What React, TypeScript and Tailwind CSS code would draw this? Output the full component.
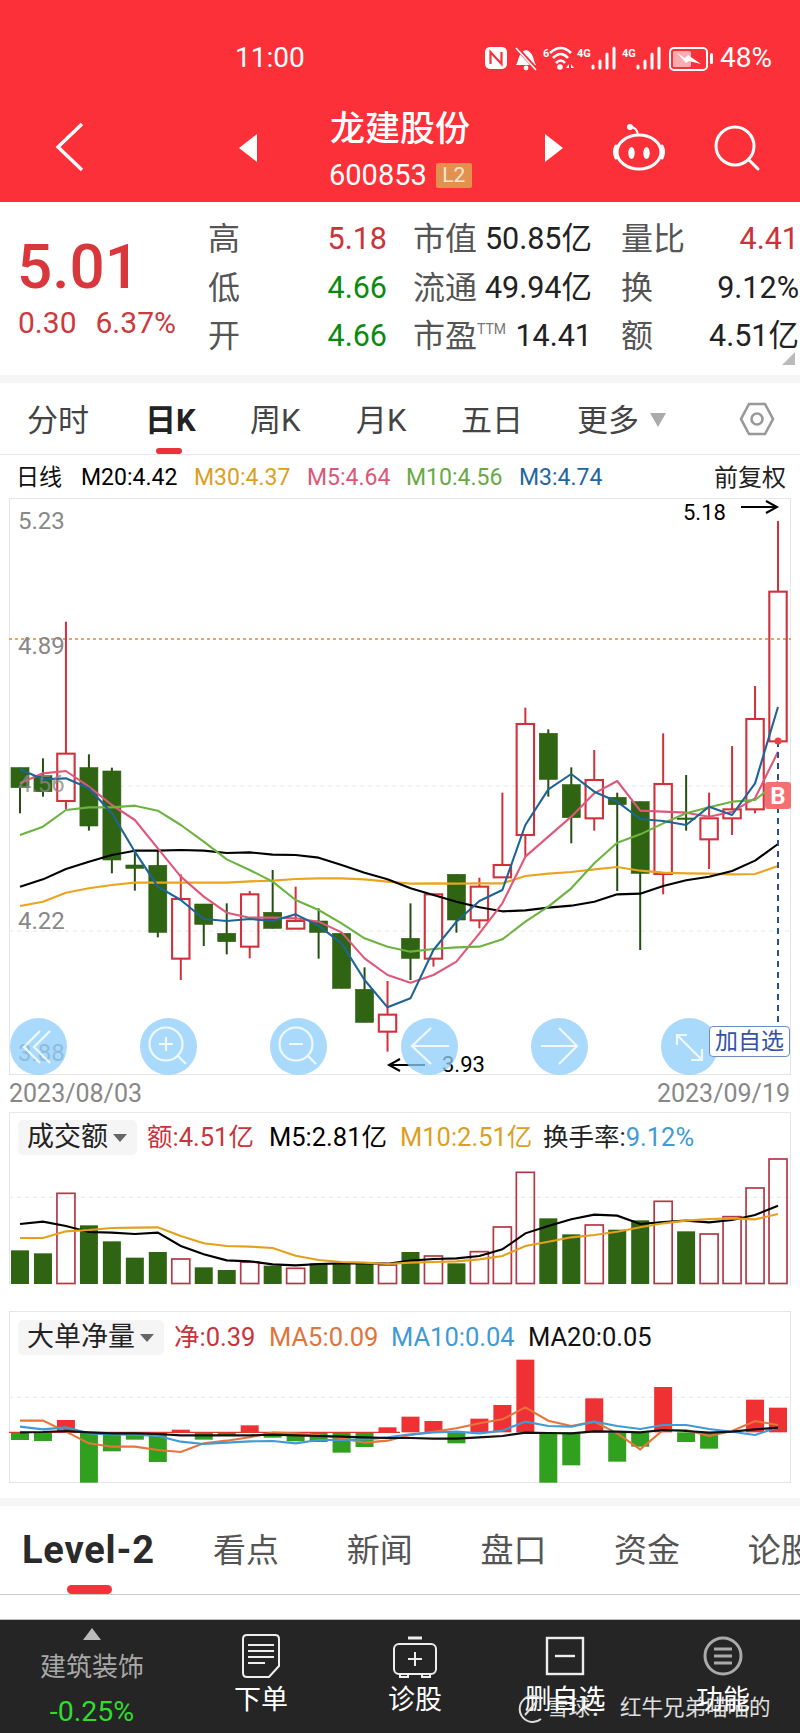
import React from "react";

const X = (i: number) => 20 + i * 22.97;
const Z = (base: number) => (z: number) => base + z / 3;
const cy = Z(720);
const vy = Z(1100);

type C = [string, number, number, number, number];
const candles: C[] = [
  ["g",143,143,203,280],["g",115,167,215,230],["r",-295,101,243,268],["g",103,143,318,332],["g",143,153,420,460],
  ["g",390,435,445,512],["g",390,436,637,652],["r",463,537,716,780],["g",552,552,613,678],["g",550,640,665,703],
  ["r",513,523,680,715],["g",450,577,625,625],["r",500,603,626,627],["g",565,603,637,716],["g",640,640,805,805],
  ["g",742,808,907,907],["r",783,884,935,995],["g",550,655,715,780],["r",523,523,716,740],["g",463,463,600,638],
  ["r",473,500,601,625],["r",218,435,472,473],["r",-37,12,345,410],["g",28,40,178,230],["g",142,194,293,370],
  ["r",90,180,295,332],["g",218,232,254,513],["g",245,245,460,690],["r",40,192,462,523],["g",165,294,298,332],
  ["r",218,295,358,447],["r",78,268,295,345],["r",-102,-3,268,280],["r",-597,-385,64,64],
];

const lines: [string, number[]][] = [
  ["#eaa41e",[558,545,518,505,495,488,488,488,488,488,484,482,477,475,475,478,485,491,490,491,490,490,468,461,456,448,441,452,458,460,461,463,462,438]],
  ["#000000",[500,478,447,425,405,392,392,390,392,399,397,404,405,413,435,458,478,505,525,545,562,574,571,563,557,545,523,521,498,481,470,453,422,372]],
  ["#e0577a",[190,160,153,200,255,300,385,470,530,578,593,593,595,605,637,715,765,788,765,725,640,550,410,350,290,220,183,272,275,278,290,275,235,95]],
  ["#6db33f",[345,320,270,262,262,257,272,315,365,418,450,485,540,570,610,655,680,695,687,682,680,658,605,560,505,430,368,343,310,280,262,245,240,185]],
  ["#1f6496",[148,178,175,205,280,395,500,540,597,603,597,603,583,617,670,780,862,835,690,605,543,510,315,208,162,215,245,297,303,315,260,285,190,-39]],
];

const volTops: [string, number][] = [
  ["g",451],["g",460],["r",280],["g",376],["g",424],["g",473],["g",456],["r",477],["g",502],["g",510],["r",486],["g",497],
  ["r",505],["g",490],["g",490],["g",490],["r",495],["g",456],["r",468],["g",490],["r",455],["r",381],["r",217],["g",355],
  ["g",403],["r",375],["g",389],["g",361],["r",304],["g",394],["r",402],["r",350],["r",264],["r",177],
];
const volBlack = [372,365,378,396,398,402,398,438,463,481,484,493,496,492,490,490,491,482,477,475,468,448,400,378,358,344,347,372,366,362,367,360,345,317];
const volOrange = [414,414,394,390,384,383,382,408,430,438,440,444,467,480,486,488,492,488,486,484,478,468,438,425,412,405,395,382,370,362,357,355,358,342];

const net = [1020,1023,960,1148,1054,1019,1086,989,1019,1008,976,1013,1024,1026,1058,1041,982,950,963,1030,956,915,779,1148,1096,895,1085,1040,861,1026,1046,997,899,923];
const netOrange = [962,962,995,1030,1040,1040,1050,1056,1030,1022,1012,998,1000,1006,1015,1028,1022,1005,995,985,970,958,922,962,978,965,1000,1048,990,990,1008,993,963,975];
const netBlue = [980,988,982,1000,1003,1004,1008,1025,1032,1028,1024,1023,1030,1020,1020,1018,1012,1003,997,995,1000,992,965,978,980,965,978,987,975,975,987,995,1005,982];
const netBlack = [997,996,993,997,1000,1000,1002,1006,1006,1006,1006,1004,1006,1008,1010,1012,1014,1014,1016,1016,1012,1008,998,999,1000,994,995,997,990,993,998,995,988,983];

const pts = (a: number[], f: (z: number) => number) => a.map((z, i) => `${X(i)},${f(z)}`).join(" ");

function Candles() {
  return (
    <svg className="absolute left-0 top-0" width="782" height="577" viewBox="9 498 782 577">
      <line x1="9" x2="791" y1="639" y2="639" stroke="#d8883a" strokeWidth="1.3" strokeDasharray="3 3" />
      <line x1="120" x2="791" y1="786" y2="786" stroke="#e6e6e6" strokeDasharray="4 4" />
      <line x1="9" x2="791" y1="931" y2="931" stroke="#e6e6e6" strokeDasharray="4 4" />
      {candles.map(([t, w1, b1, b2, w2], i) =>
        t === "g" ? (
          <g key={i}>
            <line x1={X(i)} x2={X(i)} y1={cy(w1)} y2={cy(w2)} stroke="#234f10" strokeWidth="2" />
            <rect x={X(i) - 9} y={cy(b1)} width="18" height={(b2 - b1) / 3} fill="#2f6512" stroke="#2b5c10" strokeWidth="0.6" />
          </g>
        ) : (
          <g key={i}>
            <line x1={X(i)} x2={X(i)} y1={cy(w1)} y2={cy(b1)} stroke="#d0313a" strokeWidth="2" />
            <line x1={X(i)} x2={X(i)} y1={cy(b2)} y2={cy(w2)} stroke="#d0313a" strokeWidth="2" />
            <rect x={X(i) - 8.7} y={cy(b1)} width="17.4" height={(b2 - b1) / 3} fill="#fff" fillOpacity="0" stroke="#d0313a" strokeWidth="2.1" />
          </g>
        )
      )}
      {lines.map(([c, a]) => (
        <polyline key={c} points={pts(a, cy)} fill="none" stroke={c} strokeWidth="2.1" strokeLinejoin="round" />
      ))}
      <line x1="778" x2="778" y1="741" y2="1026" stroke="#2a4f90" strokeWidth="2" strokeDasharray="6 5" />
      <circle cx="778" cy="741" r="3.5" fill="#ee4040" />
      <path d="M741 507H777M766 501L777 507L766 513" fill="none" stroke="#000" strokeWidth="2" />
      <path d="M425 1065H389M400 1059L389 1065L400 1071" fill="none" stroke="#000" strokeWidth="2" />
    </svg>
  );
}

function VolChart() {
  return (
    <svg className="absolute left-0 top-0" width="782" height="173" viewBox="9 1112 782 173">
      <line x1="9" x2="791" y1={vy(292)} y2={vy(292)} stroke="#e6e6e6" strokeDasharray="4 4" />
      {volTops.map(([t, z], i) =>
        t === "g" ? (
          <rect key={i} x={X(i) - 9} y={vy(z)} width="18" height={(552 - z) / 3} fill="#2f6512" />
        ) : (
          <rect key={i} x={X(i) - 9} y={vy(z)} width="18" height={(552 - z) / 3 - 0.5} fill="none" stroke="#b23a48" strokeWidth="1.7" />
        )
      )}
      <polyline points={pts(volBlack, vy)} fill="none" stroke="#000" strokeWidth="2.1" />
      <polyline points={pts(volOrange, vy)} fill="none" stroke="#e3a01c" strokeWidth="2.1" />
    </svg>
  );
}

function NetChart() {
  return (
    <svg className="absolute left-0 top-0" width="782" height="172" viewBox="9 1311 782 172">
      <line x1="9" x2="791" y1={vy(892)} y2={vy(892)} stroke="#e6e6e6" strokeDasharray="4 4" />
      {net.map((z, i) =>
        z > 997 ? (
          <rect key={i} x={X(i) - 9} y={vy(997)} width="18" height={(z - 997) / 3} fill="#31a01e" />
        ) : (
          <rect key={i} x={X(i) - 9} y={vy(z)} width="18" height={(997 - z) / 3} fill="#ef3133" />
        )
      )}
      <line x1="9" x2="400" y1={vy(997)} y2={vy(997)} stroke="#d83a30" strokeWidth="1.4" />
      <polyline points={pts(netOrange, vy)} fill="none" stroke="#e8743c" strokeWidth="2.1" />
      <polyline points={pts(netBlue, vy)} fill="none" stroke="#3f9ad6" strokeWidth="2.1" />
      <polyline points={pts(netBlack, vy)} fill="none" stroke="#111" strokeWidth="2.1" />
    </svg>
  );
}

function Bars({ x }: { x: number }) {
  return (
    <path
      d={`M${x + 1} 36V38M${x + 8} 31V38M${x + 15} 24V38M${x + 22} 18V38`}
      stroke="#fff"
      strokeWidth="3"
      strokeLinecap="round"
    />
  );
}

function StatusIcons() {
  return (
    <svg width="240" height="36" viewBox="0 10 240 36" className="block flex-none">
      <rect x="5" y="17" width="22" height="22" rx="5" fill="#fff" />
      <path d="M10.5 34V22L21.5 34V22" fill="none" stroke="#fb3038" strokeWidth="2.2" />
      <path d="M36 35C39 31 38 22 46 20C54 22 53 31 56 35Z" fill="#fff" />
      <circle cx="46" cy="38" r="2.4" fill="#fff" />
      <path d="M36 17L57 40" stroke="#fb3038" strokeWidth="4" />
      <path d="M36 18L56 40" stroke="#fff" strokeWidth="1.6" />
      <text x="63" y="27" fontSize="11" fontWeight="700" fill="#fff" fontFamily="Roboto">6</text>
      <path d="M70 23Q81 13 91 23M73 28Q81 20 88 28M76 33Q81 28 85 33" fill="none" stroke="#fff" strokeWidth="2.6" />
      <circle cx="80" cy="37" r="2.8" fill="#fff" />
      <path d="M86 38L89 34V38ZM91 34L94 38H91Z" fill="#fff" />
      <text x="97" y="27" fontSize="11" fontWeight="700" fill="#fff" fontFamily="Roboto">4G</text>
      <Bars x={112} />
      <text x="142" y="27" fontSize="11" fontWeight="700" fill="#fff" fontFamily="Roboto">4G</text>
      <Bars x={157} />
      <rect x="190" y="18" width="37" height="22" rx="4" fill="none" stroke="#fff" strokeWidth="2" />
      <rect x="193" y="21" width="18" height="16" rx="1.5" fill="#fff" fillOpacity="0.6" />
      <path d="M197 23L205 28L208 25L221 34L209 31L206 33Z" fill="#fff" />
      <rect x="230" y="23" width="3" height="11" rx="1.5" fill="#fff" />
    </svg>
  );
}

function RoundBtn({ children }: { children: React.ReactNode }) {
  return <div className="absolute top-[519px] w-[57px] h-[57px] rounded-full bg-[#8ecdfa]/75">{children}</div>;
}

function BtnIcon({ children }: { children: React.ReactNode }) {
  return (
    <svg width="57" height="57" viewBox="0 0 57 57" fill="none" stroke="#fff" strokeOpacity="0.8" strokeWidth="2.2">
      {children}
    </svg>
  );
}

function Chip({ label, w }: { label: string; w: string }) {
  return (
    <div className={`${w} h-[35px] rounded-[5px] bg-[#f5f5f5] flex items-center pl-[9px] gap-[5px] text-[27px] text-[#222] flex-none`}>
      <span>{label}</span>
      <span className="w-0 h-0 border-x-[7px] border-x-transparent border-t-[8px] border-t-[#666]" />
    </div>
  );
}

function Stat({ label, value, color = "text-[#222]", extra }: { label: string; value: string; color?: string; extra?: React.ReactNode }) {
  return (
    <div className="flex justify-between items-center h-[48.5px] whitespace-nowrap">
      <span className="text-[32px] text-[#555] flex items-start">{label}{extra}</span>
      <span className={`text-[30.5px] ${color}`}>{value}</span>
    </div>
  );
}

export default function App() {
  return (
    <div className="w-[800px] h-[1733px] overflow-hidden bg-white font-['Roboto','Noto_Sans_CJK_SC',sans-serif] leading-none">
      {/* red header */}
      <header className="h-[202px] bg-[#fb3038] text-white">
        <div className="h-[100px] pt-[40px] pl-[235px] flex items-start">
          <span className="w-[245px] h-[36px] flex items-center text-[28px] flex-none">11:00</span>
          <StatusIcons />
          <span className="h-[36px] flex items-center text-[28px]">48%</span>
        </div>
        <div className="relative h-[102px] flex">
          <svg className="ml-[55px] mt-[22px] flex-none" width="30" height="50" viewBox="0 0 30 50" fill="none" stroke="#fff" strokeWidth="3.4">
            <path d="M27 2L3 25L27 48" />
          </svg>
          <svg className="ml-[153px] mt-[34px] flex-none" width="20" height="28" viewBox="0 0 20 28"><path d="M19 0V28L1 14Z" fill="#fff" /></svg>
          <div className="ml-[72px] w-[214px] flex-none pt-[11px]">
            <div className="text-[35px] font-medium h-[36px] flex items-center">龙建股份</div>
            <div className="flex items-center mt-[14px] -ml-px">
              <span className="text-[29px]">600853</span>
              <span className="ml-[9px] w-[36px] h-[25px] bg-[#e3914f] rounded-[2px] flex items-center justify-center text-[21px] text-[#fbe7cf]">L2</span>
            </div>
          </div>
          <svg className="mt-[34px] flex-none" width="20" height="28" viewBox="0 0 20 28"><path d="M1 0V28L19 14Z" fill="#fff" /></svg>
          <svg className="ml-[48px] mt-[22px] flex-none" width="54" height="50" viewBox="0 0 54 50" fill="none" stroke="#fff">
            <circle cx="18" cy="5" r="3" fill="#fff" stroke="none" />
            <path d="M18 5Q25 5 26 13" strokeWidth="2" />
            <ellipse cx="27" cy="30" rx="22" ry="17" strokeWidth="3" />
            <path d="M4 24Q1 30 4 36M50 24Q53 30 50 36" strokeWidth="3" strokeLinecap="round" />
            <ellipse cx="19.5" cy="31" rx="3.2" ry="6" fill="#fff" stroke="none" />
            <ellipse cx="34.5" cy="31" rx="3.2" ry="6" fill="#fff" stroke="none" />
          </svg>
          <svg className="ml-[47px] mt-[23px] flex-none" width="48" height="50" viewBox="0 0 48 50" fill="none" stroke="#fff" strokeWidth="3">
            <circle cx="22" cy="23" r="19" />
            <path d="M36 37L45 46" strokeLinecap="round" />
          </svg>
        </div>
      </header>

      {/* quote stats */}
      <section className="relative h-[173px] flex">
        <div className="w-[208px] flex-none pl-[17px] pt-[35px]">
          <div className="text-[62px] leading-[60px] font-medium text-[#d8383c]">5.01</div>
          <div className="mt-[11px] flex text-[30px] text-[#cc3a3e] whitespace-nowrap pl-[1px]">
            <span>0.30</span><span className="ml-[19px]">6.37%</span>
          </div>
        </div>
        <div className="pt-[13px] flex-none flex">
          <div className="w-[179px]">
            <Stat label="高" value="5.18" color="text-[#cc3338]" />
            <Stat label="低" value="4.66" color="text-[#0b8a12]" />
            <Stat label="开" value="4.66" color="text-[#0b8a12]" />
          </div>
          <div className="w-[179px] ml-[26px]">
            <Stat label="市值" value="50.85亿" />
            <Stat label="流通" value="49.94亿" />
            <Stat label="市盈" value="14.41" extra={<span className="text-[14px] mt-[2px] text-[#777]">TTM</span>} />
          </div>
          <div className="w-[178px] ml-[29px]">
            <Stat label="量比" value="4.41" color="text-[#cc3338]" />
            <Stat label="换" value="9.12%" />
            <Stat label="额" value="4.51亿" />
          </div>
        </div>
        <span className="absolute right-[5px] bottom-[10px] w-0 h-0 border-l-[13px] border-l-transparent border-b-[13px] border-b-[#bbb]" />
      </section>
      <div className="h-[8px] bg-[#f5f5f5]" />

      {/* period tabs */}
      <nav className="relative h-[72px] border-b border-[#e8e8e8] flex items-center pl-[27px] pt-[3px] text-[31px] text-[#444] whitespace-nowrap">
        <span className="w-[118px]">分时</span>
        <span className="w-[105px] font-bold text-[#222]">日K</span>
        <span className="w-[106px]">周K</span>
        <span className="w-[105px]">月K</span>
        <span className="w-[116px]">五日</span>
        <span>更多</span>
        <span className="ml-[11px] w-0 h-0 border-x-[8px] border-x-transparent border-t-[14px] border-t-[#aaa]" />
        <svg className="ml-[73px] -mt-[3px]" width="36" height="36" viewBox="0 0 36 36" fill="none" stroke="#999" strokeWidth="2.6">
          <path d="M10 3H26L34 18L26 33H10L2 18Z" />
          <circle cx="18" cy="18" r="5.5" />
        </svg>
        <span className="absolute left-[156px] bottom-0 w-[26px] h-[6px] rounded-full bg-[#e8333a]" />
      </nav>

      {/* MA legend */}
      <div className="h-[43px] flex items-center pl-[16px] pt-[2px] text-[23px] whitespace-nowrap">
        <span className="w-[65px] text-[#111]">日线</span>
        <span className="w-[113px] text-black">M20:4.42</span>
        <span className="w-[113px] text-[#dc9f1f]">M30:4.37</span>
        <span className="w-[99px] text-[#dd5577]">M5:4.64</span>
        <span className="w-[113px] text-[#66aa44]">M10:4.56</span>
        <span className="w-[195px] text-[#22669f]">M3:4.74</span>
        <span className="text-[24px] text-[#222]">前复权</span>
      </div>

      {/* main chart */}
      <div className="relative ml-[9px] w-[782px] h-[577px] border border-[#e6e6e6]">
        <div className="absolute -left-px -top-px"><Candles /></div>
        <span className="absolute left-[8px] top-[10px] text-[24px] text-[#888]">5.23</span>
        <span className="absolute left-[8px] top-[135px] text-[24px] text-[#888]">4.89</span>
        <span className="absolute left-[8px] top-[273px] text-[24px] text-[#888]/80">4.56</span>
        <span className="absolute left-[8px] top-[410px] text-[24px] text-[#888]">4.22</span>
        <span className="absolute left-[8px] top-[542px] text-[24px] text-[#888]">3.88</span>
        <span className="absolute left-[673px] top-[3px] text-[22px] text-black">5.18</span>
        <span className="absolute left-[432px] top-[555px] text-[22px] text-black">3.93</span>
        <div className="absolute left-0 top-0">
          <div className="absolute left-[0px]"><RoundBtn><BtnIcon><path d="M30 13L14 29L30 45M40 13L24 29L40 45" /></BtnIcon></RoundBtn></div>
          <div className="absolute left-[130px]"><RoundBtn><BtnIcon><circle cx="26" cy="26" r="16.5" /><path d="M38 38L46 46M19 26H33M26 19V33" /></BtnIcon></RoundBtn></div>
          <div className="absolute left-[260px]"><RoundBtn><BtnIcon><circle cx="26" cy="26" r="16.5" /><path d="M38 38L46 46M19 26H33" /></BtnIcon></RoundBtn></div>
          <div className="absolute left-[391px]"><RoundBtn><BtnIcon><path d="M48 28H12M30 10L11 28L30 46" /></BtnIcon></RoundBtn></div>
          <div className="absolute left-[521px]"><RoundBtn><BtnIcon><path d="M10 28H46M28 10L46 28L28 46" /></BtnIcon></RoundBtn></div>
          <div className="absolute left-[651px]"><RoundBtn><BtnIcon><path d="M16 17L41 42M16 27V17H26M41 31V42H30" /></BtnIcon></RoundBtn></div>
        </div>
        <div className="absolute left-[755px] top-[283px] w-[26px] h-[27px] rounded-[3px] bg-[#f47070] flex items-center justify-center text-white font-bold text-[24px]">B</div>
        <div className="absolute left-[699px] top-[527px] w-[81px] h-[31px] rounded-[4px] border border-[#6d8cc4] bg-white flex items-center justify-center text-[#3352a8] text-[23px] whitespace-nowrap">加自选</div>
      </div>

      {/* dates */}
      <div className="h-[37px] pl-[9px] pr-[10px] flex justify-between items-center text-[25px] text-[#888]">
        <span>2023/08/03</span>
        <span>2023/09/19</span>
      </div>

      {/* turnover panel */}
      <div className="relative ml-[9px] w-[782px] h-[173px] border border-[#e6e6e6] border-b-0">
        <div className="absolute -left-px -top-px"><VolChart /></div>
        <div className="relative flex items-center pl-[8px] pt-[7px] text-[25.5px] whitespace-nowrap">
          <Chip label="成交额" w="w-[119px]" />
          <span className="ml-[10px] w-[122px] text-[#c8343c]">额:4.51亿</span>
          <span className="w-[131px] text-black">M5:2.81亿</span>
          <span className="w-[143px] text-[#dc9f1f]">M10:2.51亿</span>
          <span className="text-[#222]">换手率:<span className="text-[#3f9ad6]">9.12%</span></span>
        </div>
      </div>

      <div className="h-[26px]" />

      {/* net volume panel */}
      <div className="relative ml-[9px] w-[782px] h-[172px] border border-[#e6e6e6]">
        <div className="absolute -left-px -top-px"><NetChart /></div>
        <div className="relative flex items-center pl-[8px] pt-[8px] text-[25.5px] whitespace-nowrap">
          <Chip label="大单净量" w="w-[146px]" />
          <span className="ml-[10px] w-[95px] text-[#c8343c]">净:0.39</span>
          <span className="w-[122px] text-[#e0743c]">MA5:0.09</span>
          <span className="w-[137px] text-[#3f9ad6]">MA10:0.04</span>
          <span className="text-[#111]">MA20:0.05</span>
        </div>
      </div>

      <div className="h-[15px]" />
      <div className="h-[8px] bg-[#f5f5f5]" />

      {/* content tabs */}
      <nav className="relative h-[89px] border-b border-[#cccccc] flex items-center pl-[22px] text-[33px] text-[#555] whitespace-nowrap overflow-hidden">
        <span className="flex-none w-[191px] text-[38px] font-bold text-[#2a2a2a] tracking-[0.8px]">Level-2</span>
        <span className="flex-none w-[133.7px]">看点</span>
        <span className="flex-none w-[133.7px]">新闻</span>
        <span className="flex-none w-[133.7px]">盘口</span>
        <span className="flex-none w-[133.7px]">资金</span>
        <span className="flex-none">论股</span>
        <span className="absolute left-[67px] bottom-0 w-[45px] h-[9px] rounded-full bg-[#f2343a]" />
      </nav>
      <div className="h-[24px]" />

      {/* bottom bar */}
      <footer className="relative h-[114px] bg-[#252525] border-t border-[#bdbdbd] flex text-white whitespace-nowrap">
        <div className="w-[184px] flex-none flex flex-col items-center pt-[8px]">
          <span className="w-0 h-0 border-x-[9px] border-x-transparent border-b-[12px] border-b-[#bbb]" />
          <span className="mt-[14px] text-[26px] text-[#a8a8a8]">建筑装饰</span>
          <span className="mt-[18px] text-[28.5px] text-[#2fdc2f]">-0.25%</span>
        </div>
        <div className="w-[154px] flex-none flex flex-col items-center pt-[14px]">
          <svg width="40" height="44" viewBox="0 0 40 44" fill="none" stroke="#eee" strokeWidth="2">
            <path d="M6 1H34Q38 1 38 5V32L28 43H6Q2 43 2 39V5Q2 1 6 1Z" />
            <path d="M7 11H33M7 17H33M7 23H33M7 29H24" />
          </svg>
          <span className="mt-[9px] text-[27px]">下单</span>
        </div>
        <div className="w-[154px] flex-none flex flex-col items-center pt-[16px]">
          <svg width="46" height="42" viewBox="0 0 46 42" fill="none" stroke="#eee" strokeWidth="2">
            <path d="M16 2H30" strokeWidth="3" />
            <rect x="2" y="8" width="42" height="30" rx="5" />
            <path d="M23 16V30M16 23H30M8 38V41H16V38M30 38V41H38V38" />
          </svg>
          <span className="mt-[9px] text-[27px]">诊股</span>
        </div>
        <div className="w-[146px] flex-none flex flex-col items-center pt-[16px]">
          <svg width="40" height="40" viewBox="0 0 40 40" fill="none" stroke="#eee" strokeWidth="2.4">
            <rect x="2" y="2" width="36" height="36" />
            <path d="M10 20H30" />
          </svg>
          <span className="mt-[11px] text-[27px]">删自选</span>
        </div>
        <div className="w-[170px] flex-none flex flex-col items-center pt-[16px]">
          <svg width="40" height="40" viewBox="0 0 40 40" fill="none" stroke="#aaa" strokeWidth="3">
            <circle cx="20" cy="20" r="18" />
            <path d="M11 13H29M11 20H29M11 27H29" />
          </svg>
          <span className="mt-[11px] text-[27px]">功能</span>
        </div>
        <div className="absolute left-[517px] top-[73px] flex items-center text-[21.5px] text-white/85">
          <svg width="28" height="30" viewBox="0 0 28 30" fill="none" stroke="#ddd" strokeWidth="2">
            <path d="M24 26A13 13 0 1 1 24 6M8 22L20 8" />
          </svg>
          <span className="ml-[2px]">雪球</span>
          <span className="w-[30px]">：</span>
          <span>红牛兄弟喵喵的</span>
        </div>
      </footer>
    </div>
  );
}
